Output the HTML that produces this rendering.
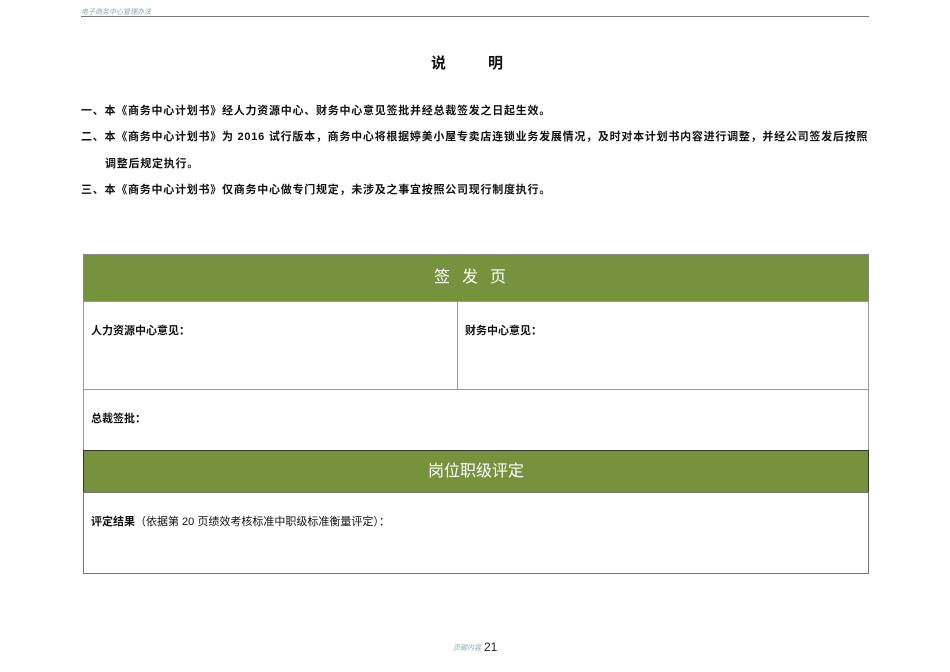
<!DOCTYPE html>
<html><head><meta charset="utf-8"><style>
body{margin:0;width:950px;height:672px;background:#fff;position:relative;font-family:"Liberation Sans","Noto Sans CJK SC",sans-serif;color:#111;overflow:hidden}
.a{position:absolute;white-space:nowrap}
.p{font-size:11px;font-weight:bold;letter-spacing:0.75px}
.g{position:absolute;left:83px;width:786px;background:#76923c;color:#fff;text-align:center;border:1px solid #888;box-sizing:border-box}
.c{position:absolute;border:1px solid #999;box-sizing:border-box;font-size:11px;font-weight:bold;padding:20px 0 0 7px}
</style></head><body>
<div class="a" style="left:81px;top:7px;font-size:7px;color:#8aa;font-style:italic">电子商务中心管理办法</div>
<div class="a" style="left:81px;top:16px;width:788px;height:1px;background:#777"></div>
<div class="a" style="left:431px;top:52px;font-size:15px;font-weight:bold;letter-spacing:42px">说明</div>
<div class="a p" style="left:81px;top:102px">一、本《商务中心计划书》经人力资源中心、财务中心意见签批并经总裁签发之日起生效。</div>
<div class="a p" style="left:81px;top:128px">二、本《商务中心计划书》为 2016 试行版本，商务中心将根据婷美小屋专卖店连锁业务发展情况，及时对本计划书内容进行调整，并经公司签发后按照</div>
<div class="a p" style="left:105px;top:155px">调整后规定执行。</div>
<div class="a p" style="left:81px;top:181px">三、本《商务中心计划书》仅商务中心做专门规定，未涉及之事宜按照公司现行制度执行。</div>
<div class="g" style="top:254px;height:48px;line-height:46px;font-size:16px;letter-spacing:12px">签发页</div>
<div class="c" style="left:83px;top:301px;width:375px;height:89px">人力资源中心意见：</div>
<div class="c" style="left:457px;top:301px;width:412px;height:89px">财务中心意见：</div>
<div class="c" style="left:83px;top:389px;width:786px;height:62px">总裁签批：</div>
<div class="g" style="top:450px;height:43px;line-height:41px;font-size:16px;border-color:#333">岗位职级评定</div>
<div class="c" style="left:83px;top:492px;width:786px;height:82px;border-color:#777">评定结果<span style="font-weight:normal">（依据第 20 页绩效考核标准中职级标准衡量评定）：</span></div>
<div class="a" style="left:453px;top:643px;font-size:7px;color:#8aa;font-style:italic">页脚内容</div>
<div class="a" style="left:484px;top:640px;font-size:12px;color:#222">21</div>
</body></html>
